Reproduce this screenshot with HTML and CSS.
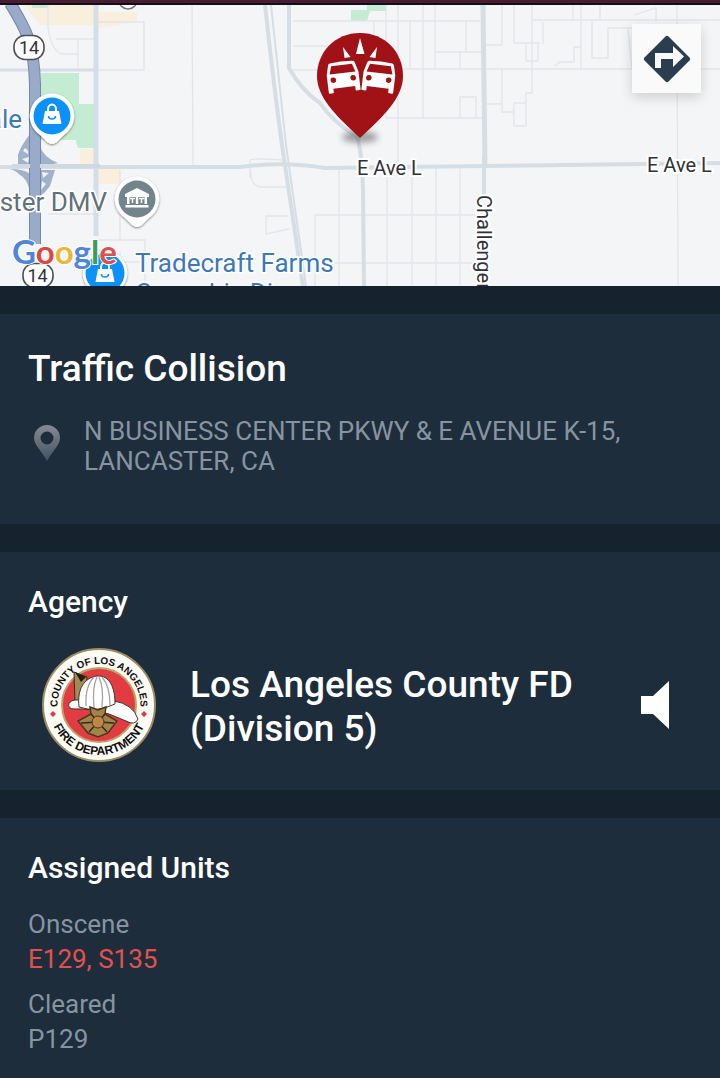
FILE: index.html
```html
<!DOCTYPE html>
<html lang="en">
<head>
<meta charset="utf-8">
<meta name="viewport" content="width=device-width, initial-scale=1">
<title>Traffic Collision</title>
<link rel="stylesheet" href="styles.css">
</head>
<body>
<div class="topbar"></div>
<div class="map">
  <svg class="map-canvas" viewBox="0 5 720 281" preserveAspectRatio="xMidYMid slice" role="img" aria-label="Map of the incident">
    <defs>
      <filter id="soft" x="-50%" y="-100%" width="200%" height="300%"><feGaussianBlur stdDeviation="3"/></filter>
      <filter id="drop" x="-30%" y="-30%" width="160%" height="160%"><feDropShadow dx="0" dy="1" stdDeviation="1.2" flood-color="#000" flood-opacity=".5"/></filter>
      <g id="bag">
        <path d="M-9.500 11 L-7 -2 H7 L9.500 11Z" fill="#fff"/>
        <path d="M-4 -2 V-4 A4 4.500 0 0 1 4 -4 V-2" fill="none" stroke="#fff" stroke-width="2"/>
        <path d="M-3.500 3 A3.500 3 0 0 0 3.500 3" fill="none" stroke="#0c90fa" stroke-width="1.600"/>
      </g>
      <path id="poi" d="M0 -22.500 A22.500 22.500 0 0 1 15 16.500 Q11 19.500 5 26 Q0 30 -5 26 Q-11 19.500 -15 16.500 A22.500 22.500 0 0 1 0 -22.500Z"/>
      <g id="car">
        <path d="M-11.500 -15 Q0 -16.500 11.500 -15 Q13 -15 13.500 -13 L16 -3.500 V14 Q16 15 15 15 H12 Q11 15 11 14 V10.500 H-11 V14 Q-11 15 -12 15 H-15 Q-16 15 -16 14 V-3.500 L-13.500 -13 Q-13 -15 -11.500 -15Z" fill="#fff"/>
        <path d="M-10.500 -12 H10.500 L13 -4 H-13Z" fill="#a01216"/>
        <circle cx="-10" cy="2" r="2.800" fill="#a01216"/>
        <circle cx="10" cy="2" r="2.800" fill="#a01216"/>
      </g>
    </defs>
    <rect y="5" width="720" height="281" fill="#f4f5f6"/>
    <path d="M24 5 H95 V25 H40Z" fill="#f9efdd"/><path d="M98 12 H137 V22 L98 28Z" fill="#f9efdd"/>
    <path d="M80 149 H95 V164 H80Z M98 169 H120 V184 H98Z" fill="#f9efdd"/>
    <path d="M41 73 H79 V104 H95 V148 H78 L76 142 L66 140 H41Z M32 5 H48 V8 H32Z M351 10 H367 V5 H386 V11 H370 L367 21 H351Z" fill="#c3ecd2"/>
    <path d="M41 140 H76 V149 H41Z" fill="#f4f5f6"/>
    <g fill="none" stroke="#e2e5ea" stroke-width="1.300">
      <path d="M48 5 V28 Q52 52 62 54 H78 M56 39 H98 M78 39 V70 M98 22 H144 V70 H98 M192 5 L193 166 M293 21 H480 M293 46 H340 M293 70 H335"/>
      <path d="M250 178 V160 Q253 158 282 160 M251 170 Q250 185 260 187 H290 M288 216 H266 V234 L289 229 M315 286 V215 H481 M339 169 V286 M335 263 H481 M48 214 H95 M120 170 V240 M98 240 H145 V286 M120 252 V286 M140 262 H98"/>
      <path d="M386 5 V118 M398 5 V165 M410 21 V69 M423 5 V118 M435 5 V68 M374 21 V40 M466 21 V51 M435 52 H481 M460 52 V69 M400 69 H720 M386 118 H484 M460 118 V97 H476 V118 M486 45 H502 V5 M514 5 V43 H540 M526 43 V61 H538 V43 M532 5 V93 H526 V126 H514 V103 H526 M486 104 H502 M502 69 V112 H514 M533 20 H720 M543 22 V44"/>
      <path d="M573 5 V20 M581 5 V70 M592 20 V58 H608 V28 H632 M628 29 L632 68 M634 15 L656 8 V22 M677 5 L678 286 M600 5 V20 M555 66 L560 62 H574 V47 H582"/>
      <path d="M387 168 V286 M412 168 V286 M436 168 V286 M460 168 V286"/>
    </g>
    <g fill="none" stroke="#d6dee5">
      <path d="M96 5 V236" stroke-width="5"/><path d="M0 70 H96" stroke-width="3"/>
      <path d="M0 167 H240 Q285 161 325 168 L484 166 L720 163" stroke-width="4"/>
      <path d="M265 5 Q274 87 282 145 L303 286" stroke-width="4"/><path d="M271 5 L286 145 L306 286" stroke-width="2"/>
      <path d="M289 5 V68 Q302 91 320 103 Q332 121 357 137 Q362 151 363 190 L364 286" stroke-width="4" transform="translate(0 0)"/>
      <path d="M483 5 L485 165" stroke-width="5"/><path d="M484 155 V196" stroke-width="4"/>
    </g>
    <path d="M30 134 Q20 147 18 155 L18 165 L30 165 V134Z M40 146 Q43 157 58 163 L40 167Z M10 169 Q24 169 30 174 V192 Q27 178 20 175 Q15 170 10 169Z M40 170 H55 L50 186 Q46 192 40 196Z" fill="#9fb1cb"/>
    <path d="M25 148 Q29 150 28 154 L23 151Z M22 159 L29 157 L28 163Z M42 172 L49 173 L43 178Z M42 181 L46 184 L41 190Z" fill="#eef1f5"/>
    <path d="M10 3 C26 29 34 43 35 84 V244" fill="none" stroke="#7288ad" stroke-width="12"/>
    <path d="M10 3 C26 29 34 43 35 84 V244" fill="none" stroke="#99abc9" stroke-width="10"/>
    <path d="M12 166 H100" stroke="#d0d9e2" stroke-width="4"/>
    <path d="M35 160 V172" stroke="#99abc9" stroke-width="10"/>
    <circle cx="128" cy="0" r="9" fill="#fff" stroke="#77777d" stroke-width="1.500"/>
    <g><rect x="14" y="35.500" width="30" height="24" rx="11" fill="#fff" stroke="#4e5256" stroke-width="1.600"/><text x="29" y="54" text-anchor="middle" class="shield-text">14</text></g>
    <g><rect x="23" y="263.500" width="30" height="24" rx="11" fill="#fff" stroke="#4e5256" stroke-width="1.600"/><text x="37.500" y="282" text-anchor="middle" class="shield-text">14</text></g>
    <text x="22" y="128" text-anchor="end" class="place">ale</text>
    <text x="107" y="211" text-anchor="end" class="place place-gray">ster DMV</text>
    <g transform="translate(52 116)"><use href="#poi" fill="#fff" filter="url(#drop)"/><circle r="18.500" fill="#0c90fa"/><use href="#bag" y="-3"/></g>
    <g transform="translate(137 199)"><use href="#poi" fill="#fff" filter="url(#drop)"/><circle r="18.500" fill="#73858c"/>
      <path d="M-12 -5 L0 -11 L12 -5 V-2 H-12Z M-10 -2 H-7.500 V5 H-10Z M7.500 -2 H10 V5 H7.500Z M-1.200 -2 H1.200 V5 H-1.200Z M-11.500 6 H11.500 V8.500 H-11.500Z" fill="#fff"/><path d="M-7 -.5 H-2 M2 -.5 H7 M-4.500 -1 V4 M4.500 -1 V4" stroke="#fff" stroke-width="1.500"/></g>
    <g transform="translate(105 273)"><use href="#poi" fill="#fff" filter="url(#drop)"/><circle r="19.500" fill="#0c90fa"/><use href="#bag" y="-2"/></g>
    <text x="135" y="272" class="place">Tradecraft Farms</text>
    <text x="135" y="302" class="place">Cannabis Disp</text>
    <text y="264" class="google"><tspan x="12" fill="#4f86dc">G</tspan><tspan fill="#d84a43">o</tspan><tspan fill="#e9b83b">o</tspan><tspan fill="#4f86dc">g</tspan><tspan fill="#3f9b58">l</tspan><tspan fill="#dc5149">e</tspan></text>
    <text x="357" y="175" class="road">E Ave L</text>
    <text x="647" y="172" class="road">E Ave L</text>
    <text transform="translate(477 195) rotate(90)" class="road">Challenger Way</text>
    <ellipse cx="360" cy="137" rx="18" ry="6" fill="#222" opacity=".4" filter="url(#soft)"/>
    <path d="M360 33 C385 33 403 52 403 76 C403 97 385 115 360 138 C335 115 317 97 317 76 C317 52 335 33 360 33Z" fill="#a01216"/>
    <use href="#car" transform="translate(343 77) rotate(-7)"/>
    <use href="#car" transform="translate(379 77) rotate(7)"/>
    <path d="M360 38 L364.500 54 H356Z M343 47 L350.500 57 L344.500 58Z M377 47 L375.500 58 L369.500 57Z" fill="#fff"/>
  </svg>
  <button class="directions" type="button" aria-label="Directions">
    <svg viewBox="0 0 48 48" width="48" height="48" aria-hidden="true"><path d="M22.500 1.500 Q24 0 25.500 1.500 L46.500 22.500 Q48 24 46.500 25.500 L25.500 46.500 Q24 48 22.500 46.500 L1.500 25.500 Q0 24 1.500 22.500Z" fill="#2b3e50"/><path d="M12 33 V18 H30 V11 L41 21.500 L30 32 V24 H18 V33Z" fill="#fafafa"/></svg>
  </button>
</div>
<main class="sections">
  <section class="panel incident">
    <h1 class="title">Traffic Collision</h1>
    <div class="address">
      <svg class="pin" viewBox="0 0 26 36" width="26" height="36" aria-hidden="true"><defs><linearGradient id="pinfill" x1="0" y1="0" x2="0" y2="1"><stop offset="0" stop-color="#868b90"/><stop offset="1" stop-color="#405163"/></linearGradient></defs><path fill-rule="evenodd" d="M13 0 A13 13 0 0 1 26 13 C26 20 19 25 13 36 C7 25 0 20 0 13 A13 13 0 0 1 13 0Z M13 6.500 A6.500 6.500 0 1 0 13 19.500 A6.500 6.500 0 1 0 13 6.500Z" fill="url(#pinfill)"/></svg>
      <p class="address-text">N BUSINESS CENTER PKWY &amp; E AVENUE K-15, LANCASTER, CA</p>
    </div>
  </section>
  <section class="panel agency">
    <h2 class="heading">Agency</h2>
    <div class="agency-row">
      <svg class="seal" viewBox="0 0 116 116" width="116" height="116" role="img" aria-label="County of Los Angeles Fire Department seal">
        <defs><path id="arc-top" d="M22 79 A41.500 41.500 0 1 1 94 79"/><path id="arc-bottom" d="M8 58 A50 50 0 0 0 108 58"/></defs>
        <circle cx="58" cy="58" r="56" fill="#fcfbf4" stroke="#9c8d62" stroke-width="2"/>
        <circle cx="58" cy="58" r="37" fill="#e33b42" stroke="#c0a26b" stroke-width="2"/>
        <text class="seal-text" text-anchor="middle"><textPath href="#arc-top" startOffset="50%">COUNTY OF LOS ANGELES</textPath></text>
        <text class="seal-text seal-text-large" text-anchor="middle"><textPath href="#arc-bottom" startOffset="50%">FIRE DEPARTMENT</textPath></text>
        <path d="M12 64 L15 67 L12 70 L9 67Z M103 64 L106 67 L103 70 L100 67Z" fill="#d73a4c"/>
        <path d="M33 25 L46 30 L43 58 L34 57Z" fill="#a38b53" stroke="#342c20"/><path d="M34 25 L45 30 L40 35Z" fill="#211e1b"/>
        <path d="M28 56 Q33 51 40 54 H73 Q92 57 97 72 Q94 79 85 74 L68 67 Q48 61 34 62 Q26 62 28 56Z" fill="#fff" stroke="#40342c"/>
        <path d="M38 60 C36 42 43 31 56 29 C69 28 74 41 74 57 Q56 66 38 60Z" fill="#fff" stroke="#40342c"/>
        <path d="M45 59 Q44 39 53 30 M53 61 Q51 40 56 30 M61 60 Q63 41 58 30 M69 58 Q69 39 61 30" fill="none" stroke="#a6a3a0" stroke-width="1.300"/>
        <path d="M49 60 L57 63 L65 60 L64 67 L76 74 L67 86 L57 90 L47 86 L37 74 L50 67Z" fill="#a38346" stroke="#493821" stroke-width="1.500"/>
        <path d="M50 67 L57 75 L64 67 M40 76 L57 75 L73 76 M48 85 L57 75 L66 85" fill="none" stroke="#302a20" stroke-width="1.500"/><circle cx="57" cy="75" r="6" fill="#bc8848" stroke="#493821"/>
      </svg>
      <p class="agency-name">Los Angeles County FD (Division 5)</p>
      <button class="sound" type="button" aria-label="Listen"><svg viewBox="0 0 28 48" width="28" height="48" aria-hidden="true"><path d="M0 15 H12 L28 0 V48 L12 33 H0Z" fill="#fff"/></svg></button>
    </div>
  </section>
  <section class="panel units">
    <h2 class="heading">Assigned Units</h2>
    <dl class="unit-list">
      <div class="unit"><dt>Onscene</dt><dd class="active">E129, S135</dd></div>
      <div class="unit"><dt>Cleared</dt><dd>P129</dd></div>
    </dl>
  </section>
</main>
</body>
</html>
```
FILE: styles.css
```css
* { box-sizing: border-box; }
html { background: #16222d; }
body {
  margin: 0;
  min-height: 100vh;
  display: flex;
  flex-direction: column;
  font-family: Roboto, "Liberation Sans", sans-serif;
  color: #fff;
}
h1, h2, p, dl, dd { margin: 0; }
button { border: 0; padding: 0; cursor: pointer; }
svg { display: block; flex: none; }

.topbar { height: 5px; background: #4a1c32; border-bottom: 2px solid #111018; }
.map { position: relative; }
.map-canvas { width: 100%; height: 281px; }
.place { font-size: 26px; fill: #3d78ba; stroke: #fff; stroke-width: 3px; paint-order: stroke; }
.place-gray { fill: #60717a; }
.road { font-size: 20px; fill: #303236; stroke: #fff; stroke-width: 4px; paint-order: stroke; }
.shield-text { font-size: 18px; fill: #303236; }
.google { font-family: Lato, Roboto, sans-serif; font-size: 33px; font-weight: 700; stroke: #fff; stroke-width: 2px; paint-order: stroke; }
.directions {
  position: absolute;
  top: 19px;
  right: 19px;
  width: 69px;
  height: 69px;
  display: grid;
  place-items: center;
  background: #fafafa;
  box-shadow: 0 4px 12px rgba(0, 0, 0, .16);
}

.sections { flex: 1; display: flex; flex-direction: column; gap: 28px; padding-top: 28px; }
.panel { padding: 28px; background: #1d2d3c; }
.title { font-size: 37px; line-height: 54px; font-weight: 500; }
.heading { font-size: 30px; line-height: 44px; font-weight: 500; }
.incident { padding-bottom: 48px; }
.address { display: flex; align-items: flex-start; gap: 24px; margin-top: 20px; padding-left: 6px; }
.pin { margin-top: 9px; }
.address-text { font-size: 26px; line-height: 30px; color: #8794a0; }

.agency { padding-bottom: 27px; }
.agency-row { display: flex; align-items: center; gap: 33px; margin-top: 23px; padding: 0 23px 0 13px; }
.agency-name { flex: 1; padding-top: 4px; font-size: 37px; line-height: 44px; font-weight: 500; }
.sound { background: none; }
.seal-text { font: bold 10px "Liberation Sans", Arial, sans-serif; fill: #111; }
.seal-text-large { font-size: 12px; }

.units { flex: 1; }
.unit-list { display: grid; gap: 10px; margin-top: 17px; color: #8794a0; font-size: 26px; line-height: 35px; }
.active { color: #e3514e; }
```
